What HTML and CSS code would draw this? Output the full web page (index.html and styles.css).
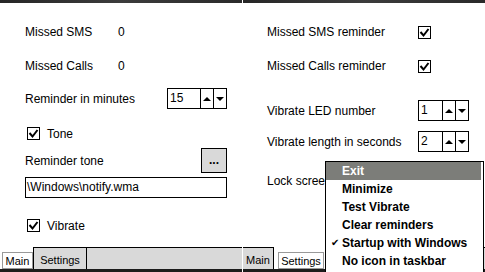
FILE: index.html
```html
<!DOCTYPE html>
<html>
<head>
<meta charset="utf-8">
<link rel="stylesheet" href="styles.css">
</head>
<body>
<div class="screen">
  <div class="panel">
    <div class="topbar"></div>
    <div class="content content-main">
      <div class="row r1"><span class="lbl lbl-main">Missed SMS</span><span>0</span></div>
      <div class="row r2"><span class="lbl lbl-main">Missed Calls</span><span>0</span></div>
      <div class="row r3"><span class="lbl lbl-spin">Reminder in minutes</span>
        <div class="spin spin-w60"><span class="spin-val">15</span><span class="spin-btn"><i class="tri-up"></i></span><span class="spin-btn"><i class="tri-down"></i></span></div>
      </div>
      <div class="row r4 chkrow"><span class="chk"><svg width="11" height="11" viewBox="0 0 11 11"><polyline points="1.5,5 4.5,8.5 9.5,2" fill="none" stroke="#000" stroke-width="2"/></svg></span><span>Tone</span></div>
      <div class="row r5"><span class="lbl lbl-btn">Reminder tone</span><span class="btn">...</span></div>
      <div class="row r6"><div class="field">\Windows\notify.wma</div></div>
      <div class="row r7 chkrow"><span class="chk"><svg width="11" height="11" viewBox="0 0 11 11"><polyline points="1.5,5 4.5,8.5 9.5,2" fill="none" stroke="#000" stroke-width="2"/></svg></span><span>Vibrate</span></div>
    </div>
    <div class="tabbar">
      <div class="tab tab-sel tab-main"><span class="focus">Main</span></div>
      <div class="tab tab-off tab-settings tab-boxed">Settings</div>
      <div class="tab-fill"></div>
    </div>
    <div class="bottombar"></div>
  </div>
  <div class="divider"></div>
  <div class="panel panel-right">
    <div class="topbar"></div>
    <div class="content content-set">
      <div class="row r1"><span class="lbl lbl-set">Missed SMS reminder</span><span class="chk"><svg width="11" height="11" viewBox="0 0 11 11"><polyline points="1.5,5 4.5,8.5 9.5,2" fill="none" stroke="#000" stroke-width="2"/></svg></span></div>
      <div class="row r2"><span class="lbl lbl-set">Missed Calls reminder</span><span class="chk"><svg width="11" height="11" viewBox="0 0 11 11"><polyline points="1.5,5 4.5,8.5 9.5,2" fill="none" stroke="#000" stroke-width="2"/></svg></span></div>
      <div class="row s3"><span class="lbl lbl-set">Vibrate LED number</span>
        <div class="spin spin-w51"><span class="spin-val">1</span><span class="spin-btn"><i class="tri-up"></i></span><span class="spin-btn"><i class="tri-down"></i></span></div>
      </div>
      <div class="row s4"><span class="lbl lbl-set">Vibrate length in seconds</span>
        <div class="spin spin-w51"><span class="spin-val">2</span><span class="spin-btn"><i class="tri-up"></i></span><span class="spin-btn"><i class="tri-down"></i></span></div>
      </div>
      <div class="row s5"><span>Lock screen</span></div>
    </div>
    <div class="tabbar">
      <div class="tab tab-off tab-main2">Main</div>
      <div class="tab tab-sel tab-settings2"><span class="focus">Settings</span></div>
      <div class="tab-fill"></div>
    </div>
    <div class="bottombar"></div>
    <div class="menu">
      <div class="mi mi-hl">Exit</div>
      <div class="mi">Minimize</div>
      <div class="mi">Test Vibrate</div>
      <div class="mi">Clear reminders</div>
      <div class="mi"><span class="mcheck">&#10004;</span>Startup with Windows</div>
      <div class="mi">No icon in taskbar</div>
    </div>
  </div>
</div>
</body>
</html>
```
FILE: styles.css
```css
html, body { margin: 0; padding: 0; background: #fff; }
body { font-family: "Liberation Sans", Arial, sans-serif; font-size: 12px; color: #000; }
.screen { display: flex; width: 485px; height: 272px; overflow: hidden; }
.panel { width: 242px; height: 272px; display: flex; flex-direction: column; position: relative; }
.panel-right { width: 242px; }
.divider { width: 1px; background: #fff; }
.topbar { height: 3px; background: linear-gradient(to right, #262626, #3c3c3c 50%, #2a2a2a); }
.content { flex: 1; padding-top: 19px; box-sizing: border-box; }
.content-main { padding-left: 25px; }
.content-set { padding-left: 24px; }
.row { display: flex; align-items: center; height: 20px; white-space: nowrap; }
.r2 { margin-top: 14px; }
.r3 { margin-top: 12px; height: 21px; }
.r4 { margin-top: 18px; height: 13px; }
.r5 { margin-top: 8px; height: 25px; }
.r6 { margin-top: 4px; height: 21px; }
.r7 { margin-top: 21px; height: 13px; }
.s3 { margin-top: 24px; height: 21px; }
.s4 { margin-top: 10px; height: 21px; }
.s5 { margin-top: 19px; }
.lbl { display: inline-block; }
.lbl-main { width: 93px; }
.lbl-spin { width: 142px; }
.lbl-btn { width: 176px; }
.lbl-set { width: 151px; }
.chkrow { padding-left: 2px; }
.chk { width: 13px; height: 13px; box-sizing: border-box; border: 1px solid #000; background: #fff; display: inline-flex; align-items: center; justify-content: center; margin-right: 7px; }
.spin { display: flex; height: 21px; box-sizing: border-box; border: 1px solid #000; background: #fff; }
.spin-w60 { width: 60px; }
.spin-w51 { width: 51px; }
.spin-val { flex: 1; padding-left: 2px; line-height: 19px; }
.spin-btn { width: 13px; box-sizing: border-box; border-left: 1px solid #000; display: flex; align-items: center; justify-content: center; }
.tri-up { width: 0; height: 0; border-left: 4px solid transparent; border-right: 4px solid transparent; border-bottom: 4px solid #000; }
.tri-down { width: 0; height: 0; border-left: 4px solid transparent; border-right: 4px solid transparent; border-top: 4px solid #000; }
.btn { width: 26px; height: 25px; box-sizing: border-box; border: 1px solid #000; background: #d9d9d9; display: flex; align-items: center; justify-content: center; font-weight: bold; letter-spacing: 0; padding-bottom: 2px; }
.field { width: 202px; height: 21px; box-sizing: border-box; border: 1px solid #000; padding-left: 1px; line-height: 19px; }
.tabbar { height: 22px; display: flex; background: #d9d9d9; font-size: 11px; }
.tab { box-sizing: border-box; display: flex; justify-content: center; align-items: center; }
.tab-off { border-top: 1px solid #000; border-right: 1px solid #000; padding-top: 2px; }
.tab-boxed { border-left: 1px solid #000; }
.tab-sel { background: #fff; align-items: flex-end; }
.focus { display: flex; align-items: center; justify-content: center; box-sizing: border-box; border: 1px solid #999; height: 17px; }
.tab-main { width: 33px; padding-left: 2px; }
.tab-main .focus { width: 31px; }
.tab-settings { width: 54px; }
.tab-main2 { width: 31px; }
.tab-settings2 { width: 52px; padding-left: 4px; justify-content: flex-start; }
.tab-settings2 .focus { width: 46px; }
.tab-fill { flex: 1; border-top: 1px solid #000; }
.bottombar { height: 3px; background: #1c1c1c; }
.menu { position: absolute; left: 82px; top: 161px; width: 159px; height: 130px; box-sizing: border-box; border: 1px solid #000; background: #fff; font-weight: bold; font-size: 12px; }
.mi { height: 18px; line-height: 18px; padding-left: 16px; margin-right: 2px; position: relative; }
.mi-hl { background: #7c7d79; color: #fff; }
.mcheck { position: absolute; left: 5px; top: 0; font-size: 10px; font-weight: normal; }
```
